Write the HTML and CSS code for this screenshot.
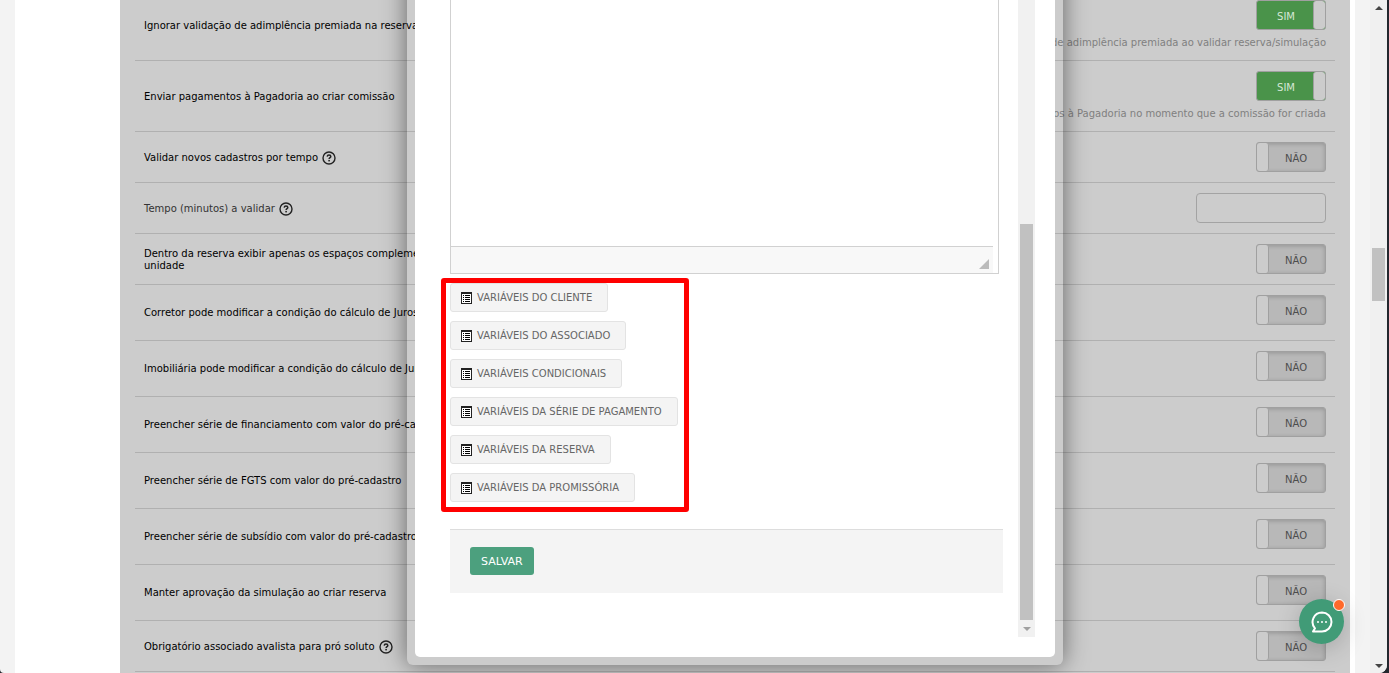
FILE: index.html
```html
<!DOCTYPE html>
<html lang="pt-BR">
<head>
    <meta charset="UTF-8">
    <meta name="viewport" content="width=device-width, initial-scale=1.0">
    <title>Configurações</title>
    <link rel="stylesheet" href="styles.css">
</head>
<body>

    <svg class="symbols" aria-hidden="true">
        <symbol id="icon-help" viewBox="0 0 14 14">
            <circle cx="7" cy="7" r="6" fill="none" stroke="#222" stroke-width="1.4"/>
            <path d="M5.2 5.6C5.3 4.5 6 4 7 4s1.8.6 1.8 1.5C8.800 6.600 7.100 6.700 7.100 8" fill="none" stroke="#222" stroke-width="1.5"/>
            <rect x="6.300" y="8.900" width="1.600" height="1.500" fill="#222"/>
        </symbol>
        <symbol id="icon-list" viewBox="0 0 11 12">
            <path d="M0 0h11v12H0z" fill="#222"/>
            <path d="M1 2h9v9H1z" fill="#fff"/>
            <path d="M2 3h1v1H2zM2 5h1v1H2zM2 7h1v1H2zM2 9h1v1H2zM4 3h5v1H4zM4 5h5v1H4zM4 7h5v1H4zM4 9h5v1H4z" fill="#000"/>
        </symbol>
    </svg>

    <div class="page">
        <div class="content">

            <!-- Settings -->
            <form class="panel">
                <div class="row hinted">
                    <label class="name" for="adimplencia">Ignorar validação de adimplência premiada na reserva</label>
                    <div class="field">
                        <span class="switch on"><input type="checkbox" id="adimplencia" checked><span>SIM</span></span>
                        <p>Ignorar validação de adimplência premiada ao validar reserva/simulação</p>
                    </div>
                </div>
                <div class="row hinted">
                    <label class="name" for="pagadoria">Enviar pagamentos à Pagadoria ao criar comissão</label>
                    <div class="field">
                        <span class="switch on"><input type="checkbox" id="pagadoria" checked><span>SIM</span></span>
                        <p>Enviar pagamentos à Pagadoria no momento que a comissão for criada</p>
                    </div>
                </div>
                <div class="row">
                    <label class="name" for="cadastros">Validar novos cadastros por tempo <svg class="help"><use href="#icon-help"/></svg></label>
                    <div class="field">
                        <span class="switch"><input type="checkbox" id="cadastros"><span>NÃO</span></span>
                    </div>
                </div>
                <div class="row">
                    <label class="name muted" for="tempo">Tempo (minutos) a validar <svg class="help"><use href="#icon-help"/></svg></label>
                    <div class="field">
                        <input class="text" type="text" id="tempo">
                    </div>
                </div>
                <div class="row">
                    <label class="name" for="espacos">Dentro da reserva exibir apenas os espaços complementares da unidade</label>
                    <div class="field">
                        <span class="switch"><input type="checkbox" id="espacos"><span>NÃO</span></span>
                    </div>
                </div>
                <div class="row tall">
                    <label class="name" for="corretor">Corretor pode modificar a condição do cálculo de Juros</label>
                    <div class="field">
                        <span class="switch"><input type="checkbox" id="corretor"><span>NÃO</span></span>
                    </div>
                </div>
                <div class="row tall">
                    <label class="name" for="imobiliaria">Imobiliária pode modificar a condição do cálculo de Juros</label>
                    <div class="field">
                        <span class="switch"><input type="checkbox" id="imobiliaria"><span>NÃO</span></span>
                    </div>
                </div>
                <div class="row tall">
                    <label class="name" for="financiamento">Preencher série de financiamento com valor do pré-cadastro</label>
                    <div class="field">
                        <span class="switch"><input type="checkbox" id="financiamento"><span>NÃO</span></span>
                    </div>
                </div>
                <div class="row tall">
                    <label class="name" for="fgts">Preencher série de FGTS com valor do pré-cadastro</label>
                    <div class="field">
                        <span class="switch"><input type="checkbox" id="fgts"><span>NÃO</span></span>
                    </div>
                </div>
                <div class="row tall">
                    <label class="name" for="subsidio">Preencher série de subsídio com valor do pré-cadastro</label>
                    <div class="field">
                        <span class="switch"><input type="checkbox" id="subsidio"><span>NÃO</span></span>
                    </div>
                </div>
                <div class="row tall">
                    <label class="name" for="aprovacao">Manter aprovação da simulação ao criar reserva</label>
                    <div class="field">
                        <span class="switch"><input type="checkbox" id="aprovacao"><span>NÃO</span></span>
                    </div>
                </div>
                <div class="row">
                    <label class="name" for="avalista">Obrigatório associado avalista para pró soluto <svg class="help"><use href="#icon-help"/></svg></label>
                    <div class="field">
                        <span class="switch"><input type="checkbox" id="avalista"><span>NÃO</span></span>
                    </div>
                </div>
            </form>

            <!-- Contract editor modal -->
            <div class="modal">
                <div class="dialog">
                    <form class="dialog-body">
                        <div class="editor">
                            <textarea aria-label="Conteúdo"></textarea>
                            <div class="editor-bar"><span class="grip"></span></div>
                        </div>
                        <div class="variables">
                            <button type="button"><svg><use href="#icon-list"/></svg>VARIÁVEIS DO CLIENTE</button>
                            <button type="button"><svg><use href="#icon-list"/></svg>VARIÁVEIS DO ASSOCIADO</button>
                            <button type="button"><svg><use href="#icon-list"/></svg>VARIÁVEIS CONDICIONAIS</button>
                            <button type="button"><svg><use href="#icon-list"/></svg>VARIÁVEIS DA SÉRIE DE PAGAMENTO</button>
                            <button type="button"><svg><use href="#icon-list"/></svg>VARIÁVEIS DA RESERVA</button>
                            <button type="button"><svg><use href="#icon-list"/></svg>VARIÁVEIS DA PROMISSÓRIA</button>
                        </div>
                        <div class="actions">
                            <button type="submit" class="save">SALVAR</button>
                        </div>
                    </form>
                    <div class="scroll">
                        <span class="thumb"></span>
                        <span class="arrow down"></span>
                    </div>
                </div>
            </div>
        </div>

        <!-- Page scrollbar -->
        <div class="scroll page-scroll">
            <span class="arrow up"></span>
            <span class="thumb"></span>
            <span class="arrow down"></span>
        </div>
    </div>

    <button type="button" class="chat" aria-label="Chat">
        <svg viewBox="0 0 22 22">
            <path d="M11 1.500a9.500 9.500 0 1 1 0 19H2l2-3.200A9.500 9.500 0 0 1 11 1.500z" fill="none" stroke="#fff" stroke-width="2" stroke-linejoin="round"/>
            <circle cx="7" cy="11" r="1" fill="#fff"/>
            <circle cx="11" cy="11" r="1" fill="#fff"/>
            <circle cx="15" cy="11" r="1" fill="#fff"/>
        </svg>
        <span class="badge"></span>
    </button>

</body>
</html>
```
FILE: styles.css
```css
* {
    box-sizing: border-box;
}
body {
    margin: 0;
    background-color: #23272e;
    font-family: Verdana, "DejaVu Sans", sans-serif;
    font-size: 10px;
    line-height: 12px;
    color: #000;
}
button, input, textarea {
    font-family: inherit;
    font-size: inherit;
}
.symbols {
    display: none;
}
.page {
    display: flex;
    height: 100vh;
    margin-right: 2px;
    overflow: hidden;
    background-color: #f3f3f3;
    border-radius: 0 0 8px 4px;
}
.content {
    position: relative;
    flex: 1;
    margin: 0 15px;
    padding: 0 5px 0 105px;
    background-color: #fff;
    overflow: hidden;
}

/* Settings rows */
.panel {
    min-height: calc(100% + 10px);
    margin-top: -10px;
    padding: 0 15px;
    background-color: #ccc;
}
.row {
    display: flex;
    align-items: center;
    height: 51px;
    padding: 0 9px;
    border-bottom: 1px solid #b0b0b0;
}
.row.hinted {
    height: 71px;
}
.row.tall {
    height: 56px;
}
.name {
    width: 30%;
    padding-top: 2px;
}
.tall .name {
    padding-top: 0;
}
.name.muted {
    color: #333;
}
.help {
    width: 14px;
    height: 14px;
    margin-left: 1px;
    vertical-align: middle;
}
.field {
    flex: 1;
    align-self: flex-start;
    display: flex;
    flex-direction: column;
    align-items: flex-end;
    padding-top: 10px;
}
.field p {
    margin: 7px 0 0;
    color: #808080;
}
.text {
    width: 130px;
    height: 30px;
    background-color: #ccc;
    border: 1px solid #a3a3a3;
    border-radius: 4px;
}
.switch {
    position: relative;
    width: 70px;
    height: 30px;
    padding: 0 0 0 10px;
    border: 1px solid #a0a0a0;
    border-radius: 3px;
    background-color: #b8b8b8;
    box-shadow: inset 0 1px 4px rgba(0, 0, 0, 0.2);
    color: #4d4d4d;
    line-height: 32px;
    text-align: center;
}
.switch::after {
    content: "";
    position: absolute;
    top: 0;
    left: 0;
    width: 11px;
    height: 28px;
    background-color: #ccc;
    border-right: 1px solid #a0a0a0;
    border-radius: 3px;
}
.switch.on {
    padding: 0 10px 0 0;
    background-color: #4a934a;
    box-shadow: none;
    color: #d6e8d6;
}
.switch.on::after {
    left: auto;
    right: 0;
    border-right: 0;
    border-left: 1px solid #a0a0a0;
}
.switch input {
    position: absolute;
    inset: 0;
    width: 100%;
    height: 100%;
    margin: 0;
    opacity: 0;
    cursor: pointer;
}

/* Modal */
.modal {
    position: absolute;
    top: -30px;
    bottom: 8px;
    left: 105px;
    right: 5px;
    max-width: 656px;
    margin: 0 auto;
    padding: 0 8px 8px;
    border-radius: 0 0 6px 6px;
    box-shadow: 0 0 25px rgba(0, 0, 0, 0.5);
}
.dialog {
    display: flex;
    gap: 15px;
    height: 100%;
    padding: 0 20px 20px 35px;
    background-color: #fff;
    border-radius: 0 0 5px 5px;
}
.dialog-body {
    flex: 1;
    display: flex;
    flex-direction: column;
    padding-bottom: 44px;
}
.editor {
    flex: 1;
    display: flex;
    flex-direction: column;
    margin-right: 4px;
    padding-right: 5px;
    border: 1px solid #d1d1d1;
    border-top: 0;
}
.editor textarea {
    flex: 1;
    border: 0;
    resize: none;
}
.editor-bar {
    display: flex;
    justify-content: flex-end;
    align-items: flex-end;
    height: 27px;
    padding: 4px;
    background-color: #f8f8f8;
    border-top: 1px solid #d1d1d1;
}
.grip {
    border-left: 10px solid transparent;
    border-bottom: 10px solid #bbb;
}
.variables {
    position: relative;
    display: flex;
    flex-direction: column;
    align-items: flex-start;
    align-self: flex-start;
    gap: 9px;
    margin: 9px 0 27px;
}
.variables::after {
    content: "";
    position: absolute;
    inset: -5px -11px -10px -9px;
    border: 5px solid #f00;
    border-radius: 3px;
    pointer-events: none;
}
.variables button {
    display: flex;
    align-items: center;
    gap: 5px;
    height: 29px;
    padding: 0 15px 0 10px;
    background-color: #f4f4f4;
    border: 1px solid #e3e3e3;
    border-radius: 3px;
    color: #666;
}
.variables svg {
    width: 11px;
    height: 12px;
}
.actions {
    padding: 17px 20px 18px;
    background-color: #f4f4f4;
    border-top: 1px solid #ddd;
}
.save {
    display: block;
    height: 28px;
    padding: 0 11px;
    background-color: #4ca07e;
    border: 0;
    border-radius: 3px;
    color: #fff;
    font-size: 11px;
}

/* Scrollbars */
.scroll {
    display: flex;
    flex-direction: column;
    align-items: center;
    width: 17px;
    padding: 254px 0 6px;
    background-color: #f1f1f1;
}
.thumb {
    flex: 1;
    width: 13px;
    background-color: #c1c1c1;
}
.arrow {
    border: 4px solid transparent;
}
.arrow.down {
    margin-top: 7px;
    border-top-color: #a0a0a0;
    border-bottom: 0;
}
.arrow.up {
    border-bottom-color: #444;
    border-top: 0;
}
.page-scroll {
    justify-content: space-between;
    padding: 6px 0 5px;
    background-color: #f0f0f0;
}
.page-scroll .thumb {
    flex: 0 0 8%;
    margin: 238px 0 auto;
}
.page-scroll .arrow.down {
    border-top-color: #444;
}

/* Chat button */
.chat {
    position: fixed;
    right: 45px;
    bottom: 29px;
    display: flex;
    align-items: center;
    justify-content: center;
    width: 45px;
    height: 45px;
    padding: 0;
    background-color: #419b77;
    border: 0;
    border-radius: 50%;
    box-shadow: 0 4px 24px rgba(0, 0, 0, 0.2);
    cursor: pointer;
}
.chat svg {
    width: 22px;
    height: 22px;
}
.badge {
    position: absolute;
    top: 0;
    right: -1px;
    width: 12px;
    height: 12px;
    background-color: #ff6a2b;
    border: 1px solid #fff;
    border-radius: 50%;
}
```
